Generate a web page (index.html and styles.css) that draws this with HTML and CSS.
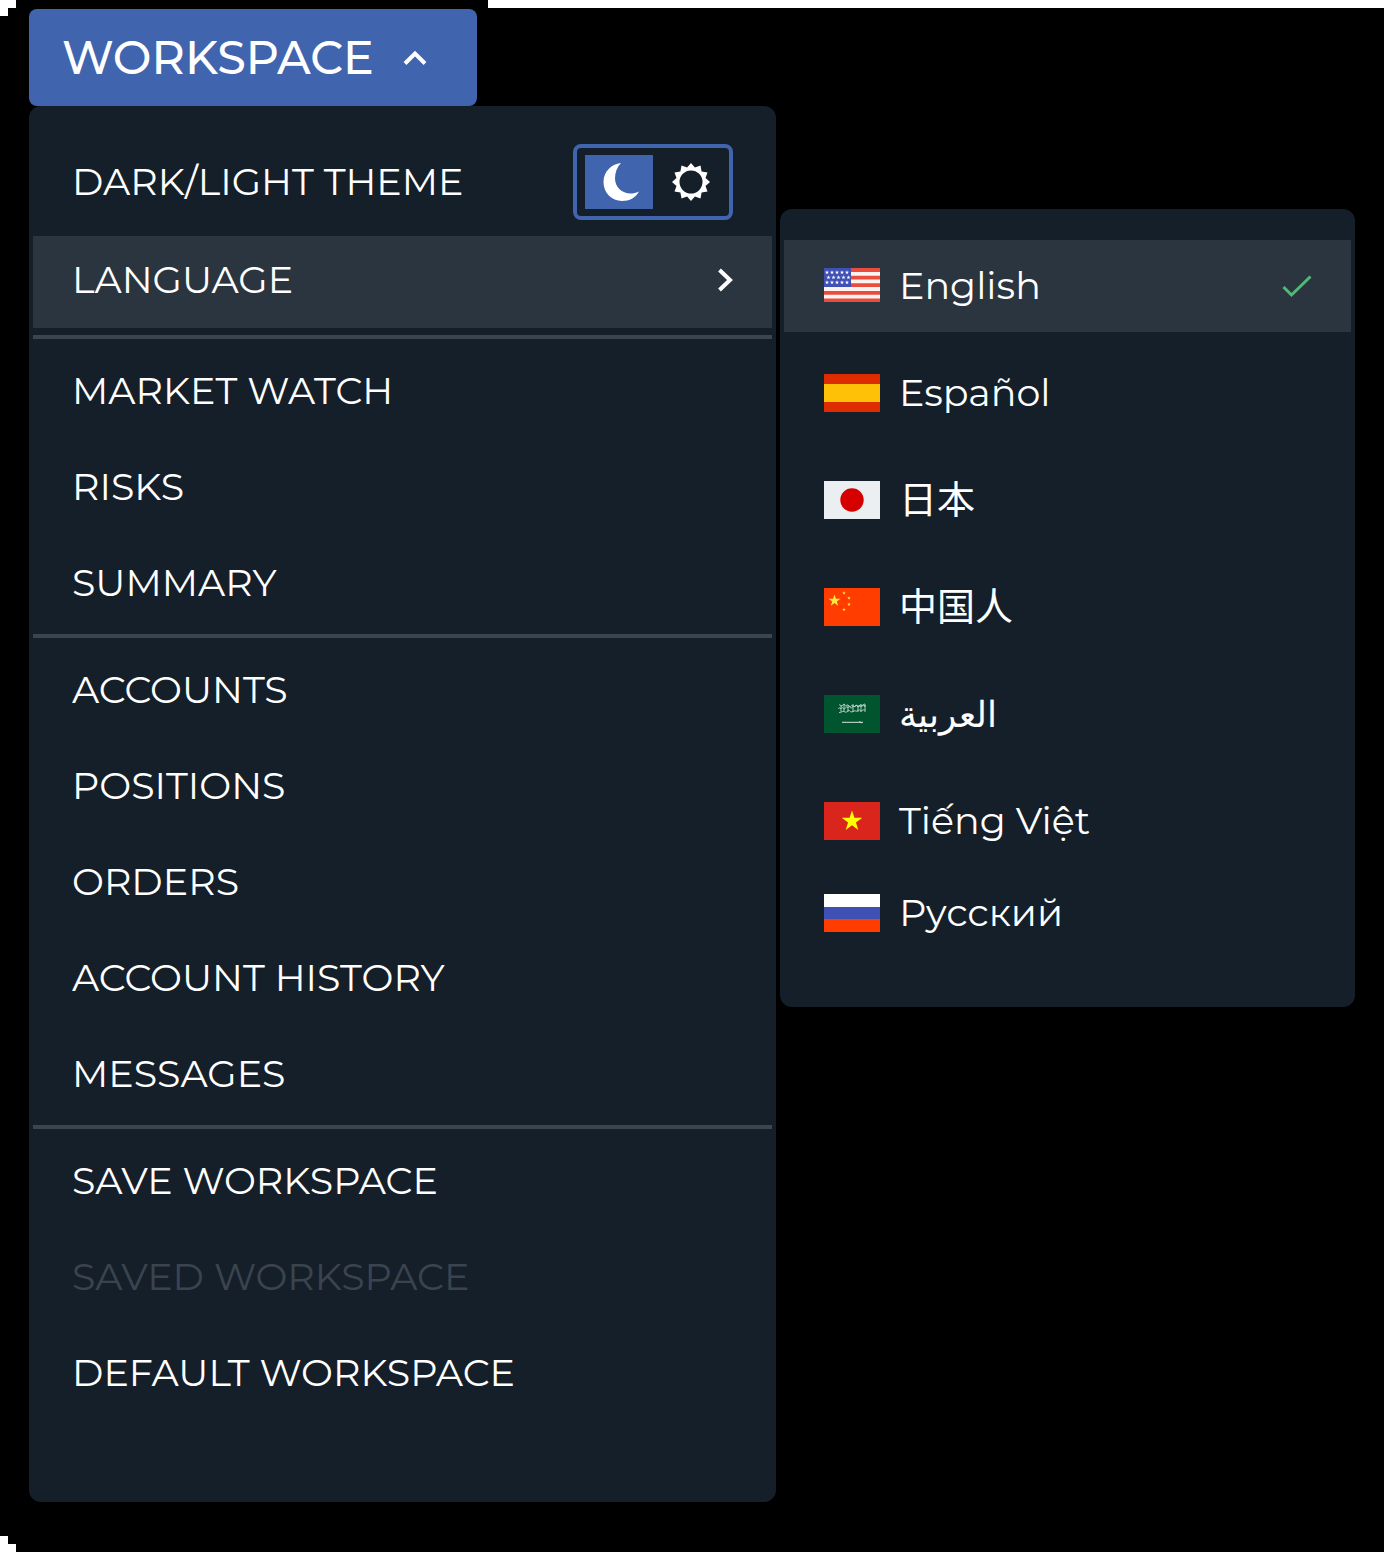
FILE: index.html
```html
<!DOCTYPE html>
<html lang="en">
<head>
<meta charset="utf-8">
<meta name="viewport" content="width=device-width, initial-scale=1">
<title>Workspace menu</title>
<link rel="stylesheet" href="styles.css">
</head>
<body>
<main class="workspace">
  <nav class="primary" aria-label="Workspace">
    <button class="trigger" type="button" aria-expanded="true">
      <span>WORKSPACE</span>
      <svg class="trigger-arrow" viewBox="0 0 24 16" aria-hidden="true"><path d="M2 13.500 12 3.500 22 13.500"/></svg>
    </button>
    <div class="menu">
      <div class="row theme-row">
        <span id="theme-label">DARK/LIGHT THEME</span>
        <div class="toggle" role="radiogroup" aria-labelledby="theme-label">
          <label class="segment">
            <input type="radio" name="theme" aria-label="Dark" checked>
            <svg viewBox="-3 0 40 40" aria-hidden="true"><path d="M19 1C9 2 1.500 10 1.500 20 1.500 30.500 9.500 39 20 39 27.500 39 33.500 36 37 29.500 33.500 31 31.500 31.500 28.500 31.500 20 31.500 13 25 13 16.500 13 10.500 15 5 19 1Z"/></svg>
          </label>
          <label class="segment">
            <input type="radio" name="theme" aria-label="Light">
            <svg viewBox="-20 -20 40 40" aria-hidden="true"><path fill-rule="evenodd" d="M0-19 3.900-14.500 9.500-16.500 10.600-10.600 16.500-9.500 14.500-3.900 19 0 14.500 3.900 16.500 9.500 10.600 10.600 9.500 16.500 3.900 14.500 0 19-3.900 14.500-9.500 16.500-10.600 10.600-16.500 9.500-14.500 3.900-19 0-14.500-3.900-16.500-9.500-10.600-10.600-9.500-16.500-3.900-14.500ZM-11.500 0A11.500 11.500 0 1 0 11.500 0A11.500 11.500 0 1 0-11.500 0Z"/></svg>
          </label>
        </div>
      </div>
      <button class="row row-open" type="button" aria-haspopup="menu" aria-expanded="true">
        <span>LANGUAGE</span>
        <svg class="row-arrow" viewBox="0 0 16 24" aria-hidden="true"><path d="M2.500 2 13 12 2.500 22"/></svg>
      </button>
      <hr class="divider">
      <button class="row" type="button">MARKET WATCH</button>
      <button class="row" type="button">RISKS</button>
      <button class="row" type="button">SUMMARY</button>
      <hr class="divider">
      <button class="row" type="button">ACCOUNTS</button>
      <button class="row" type="button">POSITIONS</button>
      <button class="row" type="button">ORDERS</button>
      <button class="row" type="button">ACCOUNT HISTORY</button>
      <button class="row" type="button">MESSAGES</button>
      <hr class="divider">
      <button class="row" type="button">SAVE WORKSPACE</button>
      <button class="row" type="button" disabled>SAVED WORKSPACE</button>
      <button class="row" type="button">DEFAULT WORKSPACE</button>
    </div>
  </nav>

  <nav class="languages" aria-label="Language">
    <button class="language selected" type="button" aria-pressed="true">
      <svg class="flag" viewBox="0 0 56 38" aria-hidden="true">
        <defs><path id="star" d="M0-10 2.250-3.090 9.510-3.090 3.630 1.180 5.880 8.090 0 3.820-5.880 8.090-3.630 1.180-9.510-3.090-2.250-3.090Z"/></defs>
        <path fill="#e94b3c" d="M0 1h56v34H0z"/>
        <path stroke="#fbf3f2" stroke-width="3.800" d="M0 6.800h56M0 14.400h56M0 22h56M0 29.600h56"/>
        <path fill="#3f51b5" d="M0 1h27v19H0z"/>
        <g fill="#fff">
          <use href="#star" transform="translate(3 5.500) scale(.22)"/><use href="#star" transform="translate(8 5.500) scale(.22)"/><use href="#star" transform="translate(13 5.500) scale(.22)"/><use href="#star" transform="translate(18 5.500) scale(.22)"/><use href="#star" transform="translate(23 5.500) scale(.22)"/>
          <use href="#star" transform="translate(4.500 10.500) scale(.22)"/><use href="#star" transform="translate(9.500 10.500) scale(.22)"/><use href="#star" transform="translate(14.500 10.500) scale(.22)"/><use href="#star" transform="translate(19.500 10.500) scale(.22)"/><use href="#star" transform="translate(24.500 10.500) scale(.22)"/>
          <use href="#star" transform="translate(3 15.500) scale(.22)"/><use href="#star" transform="translate(8 15.500) scale(.22)"/><use href="#star" transform="translate(13 15.500) scale(.22)"/><use href="#star" transform="translate(18 15.500) scale(.22)"/><use href="#star" transform="translate(23 15.500) scale(.22)"/>
        </g>
      </svg>
      <span>English</span>
      <svg class="check" viewBox="0 0 32 24" aria-hidden="true"><path d="M2.500 13 10.500 21 29.500 2.500"/></svg>
    </button>
    <button class="language" type="button">
      <svg class="flag" viewBox="0 0 56 38" aria-hidden="true"><path fill="#dd2c00" d="M0 0h56v38H0z"/><path fill="#ffc107" d="M0 10h56v18H0z"/></svg>
      <span lang="es">Español</span>
    </button>
    <button class="language" type="button">
      <svg class="flag" viewBox="0 0 56 38" aria-hidden="true"><path fill="#eceff1" d="M0 0h56v38H0z"/><circle cx="28" cy="19" r="11.700" fill="#d50000"/></svg>
      <span lang="ja">日本</span>
    </button>
    <button class="language" type="button">
      <svg class="flag" viewBox="0 0 56 38" aria-hidden="true"><path fill="#ff3d00" d="M0 0h56v38H0z"/><g fill="#ffeb3b"><use href="#star" transform="translate(10.500 12.700) scale(.63)"/><use href="#star" transform="translate(20 5) scale(.2)"/><use href="#star" transform="translate(25 10) scale(.2)"/><use href="#star" transform="translate(25 16.300) scale(.2)"/><use href="#star" transform="translate(20 21.500) scale(.2)"/></g></svg>
      <span lang="zh">中国人</span>
    </button>
    <button class="language" type="button">
      <svg class="flag" viewBox="0 0 56 38" aria-hidden="true">
        <path fill="#00552e" d="M0 0h56v38H0z"/>
        <g fill="none" stroke="#d5e4dc" stroke-width=".8">
          <path d="M15 10c2-1 2 3 4 0s2 2 3 1 1-2 3 0 2-2 4 0 2-2 4 0 2-2 3 0 2-1 3-1 2 0 2 2M14.500 14c1-3 2 1 3-1s2 3 4 0 2 1 3-1 2 3 4 0 2 2 3-1 3 3 4 0 3 2 4-1 2 1 2 1M15 17.500c2 1 3-2 5-1s3 1 4-1 2 3 5 1 3 1 5-1 2 2 4 0 2 1 3-1M17 10v7M20 9v7M24 10v7M29 9v8M34 10v7M37 9v8M41 10v7"/>
          <path d="M18 27.300h21" stroke-width="1"/><path d="M35 26.500l3 1.500"/>
        </g>
      </svg>
      <span class="arabic" lang="ar">العربية</span>
    </button>
    <button class="language" type="button">
      <svg class="flag" viewBox="0 0 56 38" aria-hidden="true"><path fill="#da251d" d="M0 0h56v38H0z"/><use href="#star" fill="#ff0" transform="translate(28 19.200) scale(1.080)"/></svg>
      <span lang="vi">Tiếng Việt</span>
    </button>
    <button class="language" type="button">
      <svg class="flag" viewBox="0 0 56 38" aria-hidden="true"><path fill="#fff" d="M0 0h56v13H0z"/><path fill="#3f51b5" d="M0 13h56v12H0z"/><path fill="#ff3d00" d="M0 25h56v13H0z"/></svg>
      <span lang="ru">Русский</span>
    </button>
  </nav>
</main>
</body>
</html>
```
FILE: styles.css
```css
* {
  box-sizing: border-box;
}

html {
  min-height: 100%;
  background:
    linear-gradient(#fff, #fff) left top / 16px 8px no-repeat,
    linear-gradient(#fff, #fff) left top / 8px 16px no-repeat,
    linear-gradient(#fff, #fff) 488px 0 / 100% 8px no-repeat,
    linear-gradient(#fff, #fff) left bottom / 8px 16px no-repeat,
    linear-gradient(#fff, #fff) left bottom / 16px 8px no-repeat,
    #000;
}

body {
  margin: 0;
  padding: 9px 29px 50px;
  color: #fff;
  font: 400 38px/48px Montserrat, Inter, "Noto Sans CJK SC", sans-serif;
}

button {
  border: 0;
  margin: 0;
  background: none;
  color: inherit;
  font: inherit;
  text-align: left;
  cursor: pointer;
}

.workspace {
  display: grid;
  grid-template-columns: 747fr 575fr;
  gap: 4px;
  align-items: start;
}

.trigger {
  display: flex;
  align-items: center;
  justify-content: space-between;
  width: 60%;
  height: 97px;
  padding: 0 50px 0 33px;
  border-radius: 8px;
  background: #4164ae;
  font-size: 46px;
  font-weight: 500;
}

svg {
  display: block;
  flex: none;
}

.trigger-arrow,
.row-arrow,
.check {
  fill: none;
  stroke: #fff;
  stroke-width: 4;
}

.trigger-arrow {
  width: 24px;
  height: 16px;
}

.row-arrow {
  width: 16px;
  height: 24px;
}

.menu,
.languages {
  border-radius: 12px;
  background: #151f2a;
}

.menu {
  display: flex;
  flex-direction: column;
  padding: 30px 4px 81px;
}

.row {
  display: flex;
  align-items: center;
  justify-content: space-between;
  height: 96px;
  padding: 0 39px;
}

.row:disabled {
  color: #3b444e;
  cursor: default;
}

.theme-row {
  height: 92px;
  margin-bottom: 8px;
}

.row-open {
  height: 92px;
  margin-bottom: 4px;
  padding-bottom: 4px;
  background: #2b353f;
}

.divider {
  width: 100%;
  height: 4px;
  margin: 3px 0 4px;
  border: 0;
  background: #3b444f;
}

.toggle {
  display: flex;
  width: 160px;
  height: 76px;
  padding: 7px 0 7px 8px;
  border: 4px solid #4164ae;
  border-radius: 8px;
}

.segment {
  display: flex;
  flex: 1;
  align-items: center;
  justify-content: center;
  cursor: pointer;
}

.segment:first-child {
  flex: 0 0 68px;
}

.segment:has(:checked) {
  background: #4164ae;
}

.segment input {
  appearance: none;
  width: 0;
  height: 0;
  margin: 0;
}

.segment svg {
  width: 40px;
  height: 40px;
  fill: #fff;
}

.languages {
  display: flex;
  flex-direction: column;
  gap: 15px;
  margin-top: 200px;
  padding: 31px 4px 48px;
}

.language {
  display: flex;
  align-items: center;
  gap: 19px;
  height: 92px;
  padding: 0 38px 0 40px;
}

.language:last-child {
  margin-top: -15px;
}

.selected {
  background: #2b353f;
}

.arabic {
  font-size: 36px;
}

.flag {
  width: 56px;
  height: 38px;
}

.check {
  width: 32px;
  height: 24px;
  margin-left: auto;
  stroke: #4fba76;
  stroke-width: 3;
}
```
